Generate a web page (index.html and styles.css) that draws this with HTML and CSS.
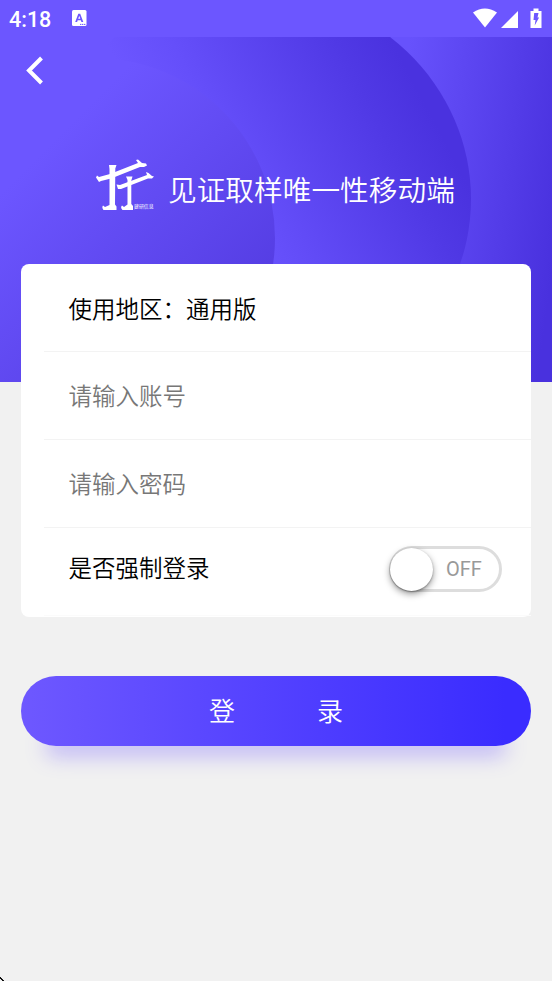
FILE: index.html
```html
<!DOCTYPE html>
<html lang="zh-CN">
<head>
<meta charset="utf-8">
<title>登录</title>
<link rel="stylesheet" href="styles.css">
</head>
<body>
<header class="status">
  <span class="time">4:18</span>
  <svg class="ime" width="15" height="17" viewBox="0 0 15 17"><rect x="0" y="0" width="14.5" height="16" rx="1.5" fill="#fff"/><path d="M3.2 12 6.3 3.8h1.9l3.1 8.2H9.4l-.6-1.7H5.700L5.100 12ZM6.200 8.800h2.100L7.250 5.800Z" fill="#6c56ff" fill-rule="evenodd"/><path d="M8 14.400h6" stroke="#6c56ff" stroke-width="1" stroke-dasharray="1.300 .6"/></svg>
  <svg class="signals" width="70" height="22" viewBox="0 0 70 22" fill="#fff"><path d="M0 4.500Q11.800-3.500 24 4.500L12 19.500Z"/><path d="M28 20 45 3V20Z"/><path d="M57.500 3h3V.500h5V3h3v17H57.500Z"/><path d="M61.200 5h4.300l-1 4.500h1.600L61.700 17.500l.8-5.500H60.500Z" fill="#6c56ff"/></svg>
</header>
<section class="hero">
  <svg class="waves" width="552" height="345" viewBox="0 37 552 345">
    <defs>
      <linearGradient id="base" gradientUnits="userSpaceOnUse" x1="395" y1="150" x2="565" y2="172"><stop offset="0" stop-color="#6752fc"/><stop offset="1" stop-color="#4931de"/></linearGradient>
      <linearGradient id="big" gradientUnits="userSpaceOnUse" x1="115" y1="60" x2="339.500" y2="-58.600"><stop offset="0" stop-color="#6c56ff"/><stop offset=".23" stop-color="#654ffa"/><stop offset=".8" stop-color="#5039e5"/><stop offset="1" stop-color="#4a32df"/></linearGradient>
      <linearGradient id="small" gradientUnits="userSpaceOnUse" x1="75" y1="120" x2="267" y2="312"><stop offset="0" stop-color="#6c56ff"/><stop offset="1" stop-color="#533be1"/></linearGradient>
    </defs>
    <rect y="37" width="552" height="345" fill="url(#base)"/>
    <rect y="37" width="270" height="345" fill="#6c56ff"/>
    <ellipse cx="252.500" cy="199" rx="218.500" ry="208.500" fill="url(#big)"/>
    <circle cx="95" cy="238" r="180" fill="url(#small)"/>
  </svg>
  <svg class="back" width="20" height="30" viewBox="0 0 20 30"><path d="M18.500 2 6 14.500 18.500 27" fill="none" stroke="#fff" stroke-width="4"/></svg>
  <div class="brand">
    <div class="logo">
      <svg width="60" height="54" viewBox="0 0 60 54" fill="#fff"><path d="M1 18.500 2 16.500 4 18 15 15 43 4 41 1 43 .5 47 4 51 4.500 52 6.500 49 8 45 8 16 19.500 6 22 4 23Z"/><path d="M14 6h7.500l-1.200 3.500-.3 36 1.500 2v3.500H8.500q-2-2.500-.5-4.500l2 1.500 4.500-2V10Z"/><path d="M21.500 25.500 25 26 52 16 51 13 53.500 14 57 17 59 17.500 57 19.500 53 19.500 26 30 23 30Z"/><path d="M31 17.500h6.500l-1.200 4V45l1.700 2v4H27.500q-2.500-2.500-.5-4.500l2 1.500 3.500-2.500V21Z"/></svg>
      <span class="tiny">建研信息</span>
    </div>
    <h1>见证取样唯一性移动端</h1>
  </div>
</section>
<main>
  <form class="card">
    <div class="row"><span>使用地区：通用版</span></div>
    <div class="row hint"><span>请输入账号</span></div>
    <div class="row hint"><span>请输入密码</span></div>
    <div class="row force"><span>是否强制登录</span><div class="switch"><i class="knob"></i><span>OFF</span></div></div>
  </form>
  <div class="login"><span>登</span><span>录</span></div>
</main>
<svg class="corner" width="5" height="5" viewBox="0 0 5 5"><path d="M0 1h1v1h1v1h1v1h1v1H2V4H1V3H0Z" fill="#111"/></svg>
</body>
</html>
```

FILE: styles.css
```css
* { box-sizing: border-box; }
body {
  margin: 0;
  height: 981px;
  overflow: hidden;
  background: #f1f1f1;
  font-family: Roboto, "Noto Sans CJK SC", sans-serif;
  color: #000;
}
svg { display: block; flex: none; }
.status {
  height: 37px;
  display: flex;
  align-items: flex-start;
  padding: 8px 9px 0 9px;
  background: #6c56ff;
}
.time { width: 63px; color: #fff; font-size: 21.500px; line-height: 24px; font-weight: 500; }
.ime { margin-top: 2px; }
.signals { margin-left: auto; }
.hero { position: relative; height: 345px; padding: 19px 0 0 23px; }
.waves { position: absolute; left: 0; top: 0; }
.back { position: relative; }
.brand { position: relative; display: flex; margin: 73px 0 0 72px; }
.logo { position: relative; width: 73px; height: 54px; }
.tiny {
  position: absolute;
  left: 39px;
  top: 43px;
  font-size: 10px;
  line-height: 10px;
  color: #fff;
  white-space: nowrap;
  transform: scale(.49);
  transform-origin: 0 50%;
}
h1 {
  margin: 10px 0 0;
  font-size: 28.700px;
  line-height: 40px;
  font-weight: 350;
  font-family: "Noto Sans CJK SC", sans-serif;
  color: #fff;
  white-space: nowrap;
}
main { position: relative; margin: -118px 21px 0; }
.card { height: 353px; padding-left: 23px; background: #fff; border-radius: 8px; }
.row {
  height: 88px;
  display: flex;
  align-items: center;
  padding: 5px 29px 0 24.500px;
  border-bottom: 1px solid #f3f3f3;
  font-size: 23.500px;
  font-weight: 350;
  line-height: 36px;
}
.row + .row { padding-top: 3px; }
.hint { color: #777; }
.row.force { padding-top: 1px; border-bottom-color: #fbfbfb; justify-content: space-between; }
.force > span { margin-top: -7px; }
.switch {
  position: relative;
  display: flex;
  align-items: center;
  width: 113px;
  height: 46px;
  margin-top: -6px;
  padding-left: 54px;
  border: 3px solid #ddd;
  border-radius: 23px;
  font-size: 20px;
  font-weight: 400;
  color: #999;
}
.knob {
  position: absolute;
  left: -2px;
  top: -1px;
  width: 43px;
  height: 43px;
  border-radius: 50%;
  background: #fff;
  box-shadow: 0 3px 7px rgba(0,0,0,.4), 0 1px 2px rgba(0,0,0,.3);
}
.login {
  height: 70px;
  margin-top: 59px;
  display: flex;
  justify-content: center;
  gap: 82px;
  border-radius: 35px;
  background: linear-gradient(90deg, #6e58ff, #3a2cff 95%);
  box-shadow: 0 35px 20px -24px rgba(108,86,255,.34);
  color: #fff;
  font-size: 26px;
  font-weight: 350;
  line-height: 72px;
}
.corner { position: absolute; left: 0; top: 976px; }
```
